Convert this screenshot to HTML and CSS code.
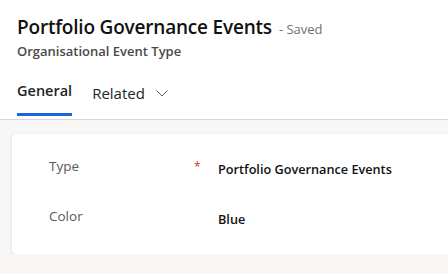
FILE: index.html
```html
<!DOCTYPE html>
<html lang="en">
<head>
  <meta charset="UTF-8">
  <title>Portfolio Governance Events</title>
  <link rel="stylesheet" href="styles.css">
</head>
<body>
  <!-- Record header -->
  <div class="header">
    <div class="title-row">
      <h1 class="title">Portfolio Governance Events</h1>
      <span class="saved">- Saved</span>
    </div>
    <div class="entity">Organisational Event Type</div>
    <div class="tabs">
      <div class="tab active">General</div>
      <div class="tab">Related
        <svg class="chevron" width="12" height="7" viewBox="0 0 12 7"><path d="M0.5 0.5 L6 6 L11.5 0.5" fill="none" stroke="#605e5c" stroke-width="1"/></svg>
      </div>
    </div>
  </div>

  <!-- Form body -->
  <div class="body">
    <div class="card">
      <div class="field">
        <div class="label">Type</div>
        <div class="req">*</div>
        <div class="value">Portfolio Governance Events</div>
      </div>
      <div class="field">
        <div class="label">Color</div>
        <div class="req"></div>
        <div class="value">Blue</div>
      </div>
    </div>
  </div>
</body>
</html>
```

FILE: styles.css
```css
/* Base */
body {
  margin: 0;
  font-family: "Open Sans", "Noto Sans", sans-serif;
  color: #242424;
  background: #f8f7f6;
  overflow: hidden;
}
/* Header */
.header {
  background: #fff;
  padding: 13px 0 0 17px;
  border-bottom: 1px solid #d9d7d5;
  height: 120px;
  box-sizing: border-box;
}
.title-row {
  display: flex;
  align-items: baseline;
  gap: 7px;
}
.title {
  margin: 0;
  font-size: 19px;
  font-weight: 600;
  line-height: 28px;
  letter-spacing: -0.2px;
  color: #111;
}
.saved {
  font-size: 13px;
  color: #707070;
}
.entity {
  font-size: 13px;
  font-weight: 600;
  color: #4a4846;
  line-height: 18px;
  margin-top: 1px;
}
.tabs {
  display: flex;
  gap: 20px;
  margin-top: 21px;
}
.tab {
  font-size: 15px;
  line-height: 20px;
  padding-bottom: 12px;
  display: flex;
  align-items: center;
  gap: 11px;
  color: #242424;
}
.tab.active {
  font-weight: 600;
  font-size: 14.5px;
  border-bottom: 3px solid #1a63de;
}
.chevron {
  margin-top: 2px;
}
/* Card */
.body {
  padding: 14px 0 0 12px;
}
.card {
  background: #fff;
  border-radius: 4px 0 0 4px;
  box-shadow: 0 1px 3px rgba(0, 0, 0, 0.13), 0 0 1px rgba(0, 0, 0, 0.08);
  padding: 22px 0 19px 37px;
  height: 120px;
  box-sizing: border-box;
}
.field {
  display: flex;
  height: 50px;
  font-size: 13.5px;
}
.label {
  width: 145px;
  color: #5a5856;
  line-height: 20px;
}
.req {
  width: 24px;
  color: #d13438;
  font-size: 12px;
  line-height: 14px;
  padding-top: 4px;
}
.value {
  font-weight: 600;
  font-size: 12.7px;
  color: #111;
  line-height: 20px;
  margin-top: 3px;
}
```
